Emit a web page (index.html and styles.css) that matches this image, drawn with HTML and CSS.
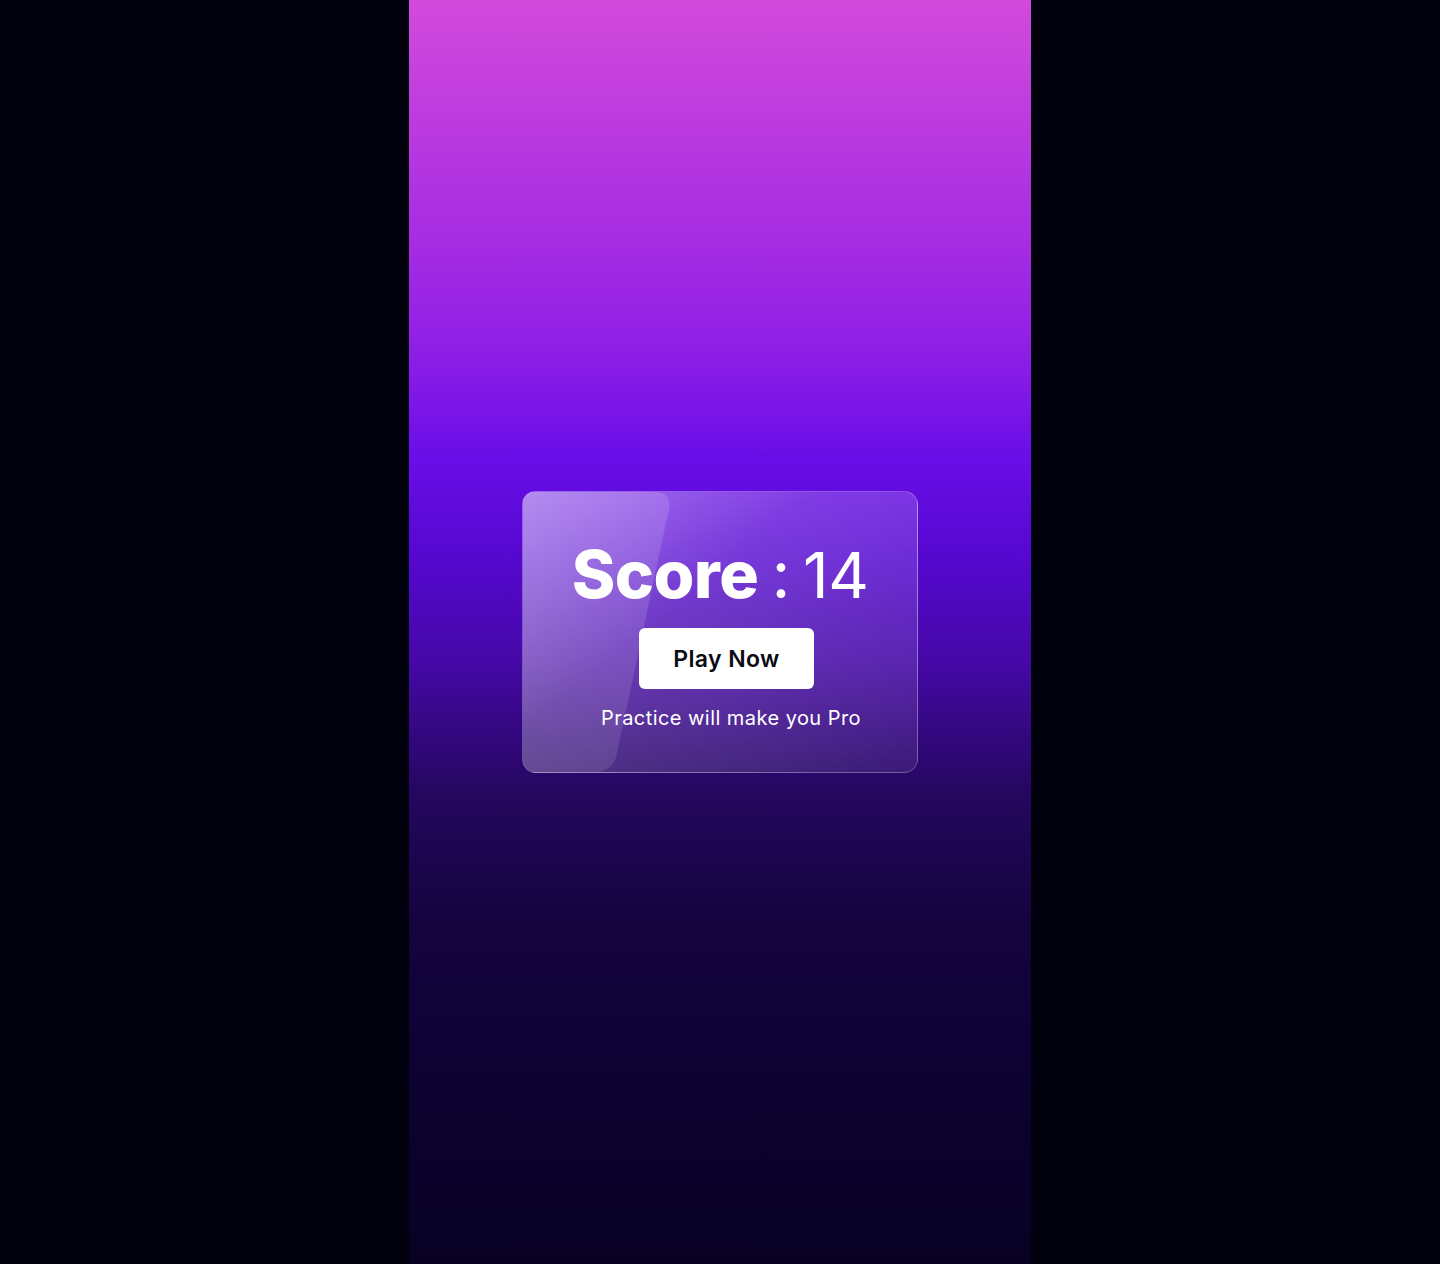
FILE: index.html
```html
<!DOCTYPE html>
<html lang="en">
<head>
<meta charset="utf-8">
<title>Score</title>
<link rel="stylesheet" href="styles.css">
</head>
<body>
<main class="screen">
  <section class="card">
    <span class="shine"></span>
    <h1 class="score"><strong>Score</strong> : <span class="num">14</span></h1>
    <button class="play">Play Now</button>
    <p class="tip">Practice will make you Pro</p>
  </section>
</main>
</body>
</html>
```

FILE: styles.css
```css
html, body {
  margin: 0;
  padding: 0;
  height: 100%;
}
body {
  background: #02020f;
  display: flex;
  justify-content: center;
  font-family: "Inter", "Noto Sans", sans-serif;
}
.screen {
  width: 622px;
  height: 1264px;
  background: linear-gradient(180deg,
    #d24adc 0%,
    #a92ee2 18%,
    #8e1ee6 28%,
    #6a0ee8 36%,
    #5508d0 44%,
    #4608a8 52%,
    #24075e 63%,
    #14043e 73%,
    #0c0231 86%,
    #080124 100%);
  display: flex;
  align-items: center;
  justify-content: center;
}
.card {
  position: relative;
  overflow: hidden;
  box-sizing: border-box;
  width: 396px;
  height: 282px;
  border-radius: 14px;
  border: 1px solid rgba(255, 255, 255, 0.22);
  background: linear-gradient(140deg,
    rgba(255, 255, 255, 0.45) 0%,
    rgba(255, 255, 255, 0.2) 40%,
    rgba(255, 255, 255, 0.08) 100%);
  display: flex;
  flex-direction: column;
  align-items: center;
  padding-top: 42px;
  color: #fff;
}
.shine {
  position: absolute;
  left: -60px;
  top: 0;
  width: 150px;
  height: 100%;
  transform-origin: bottom left;
  transform: skewX(-12deg);
  border-radius: 0 16px 16px 0;
  background: linear-gradient(180deg, rgba(255,255,255,0.14), rgba(255,255,255,0.1));
}
.score {
  position: relative;
  margin: 0;
  font-size: 66px;
  line-height: 80px;
  font-weight: 400;
  letter-spacing: -0.5px;
  word-spacing: -5px;
}
.score strong {
  font-weight: 800;
}
.score .num {
  font-size: 63px;
}
.play {
  position: relative;
  margin-top: 13px;
  width: 175px;
  height: 61px;
  border: none;
  border-radius: 6px;
  background: #fff;
  color: #0b0b14;
  font-family: inherit;
  font-size: 23px;
  font-weight: 600;
  letter-spacing: 0.4px;
  cursor: pointer;
  margin-left: 13px;
}
.tip {
  position: relative;
  margin: 16px 0 0 22px;
  font-size: 20px;
  line-height: 26px;
  font-weight: 400;
  letter-spacing: 0.45px;
}
```
